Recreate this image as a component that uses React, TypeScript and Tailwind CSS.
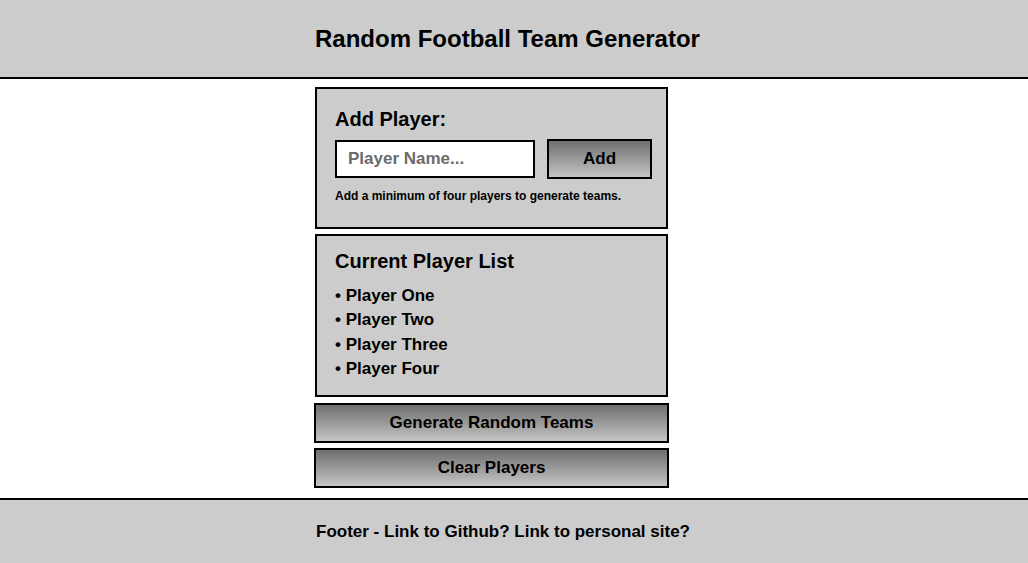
import { useState } from 'react';

const players = ['Player One', 'Player Two', 'Player Three', 'Player Four'];

const gradientBtn =
  'shrink-0 border-2 border-black bg-gradient-to-b from-[#6f6f6f] to-[#c6c6c6] font-bold text-[17px] text-black';

const App = () => {
  const [name, setName] = useState('');

  return (
    <div className="min-h-screen bg-white text-black font-['Liberation_Sans',Arial,sans-serif]">
      {/* Header */}
      <header className="h-[79px] bg-[#cccccc] border-b-2 border-black flex items-center pl-[315px]">
        <h1 className="text-[24px] font-bold leading-none">Random Football Team Generator</h1>
      </header>

      <main className="ml-[314px] w-[355px] pt-2 pb-[10px] flex flex-col items-center">
        {/* Add player card */}
        <section className="w-[353px] h-[142px] border-2 border-black bg-[#cccccc] pl-[18px] pr-[14px] pt-[19px]">
          <h2 className="text-[20px] font-bold leading-[23px]">Add Player:</h2>
          <div className="mt-[8px] flex items-center gap-3">
            <input
              value={name}
              onChange={(e) => setName(e.target.value)}
              placeholder="Player Name..."
              className="shrink-0 w-[200px] h-[38px] border-2 border-black bg-white px-[11px] text-[17px] font-bold placeholder:text-[#6b6b6b] outline-none"
            />
            <button className={`${gradientBtn} w-[105px] h-[40px]`}>Add</button>
          </div>
          <p className="mt-[10px] text-[12px] font-bold leading-[14px]">
            Add a minimum of four players to generate teams.
          </p>
        </section>

        {/* Player list */}
        <section className="mt-[5px] w-[353px] h-[163px] border-2 border-black bg-[#cccccc] px-[18px] pt-[14px]">
          <h2 className="text-[20px] font-bold leading-[23px]">Current Player List</h2>
          <ul className="mt-[11px] text-[17px] font-bold leading-[24.3px]">
            {players.map((p) => (
              <li key={p}>• {p}</li>
            ))}
          </ul>
        </section>

        <button className={`${gradientBtn} mt-[6px] w-[355px] h-[40px]`}>Generate Random Teams</button>
        <button className={`${gradientBtn} mt-[5px] w-[355px] h-[40px]`}>Clear Players</button>
      </main>

      {/* Footer */}
      <footer className="border-t-2 border-black bg-[#cccccc] h-[66px] flex items-center pl-[316px]">
        <p className="text-[17px] font-bold">Footer - Link to Github? Link to personal site?</p>
      </footer>
    </div>
  );
};

export default App;
